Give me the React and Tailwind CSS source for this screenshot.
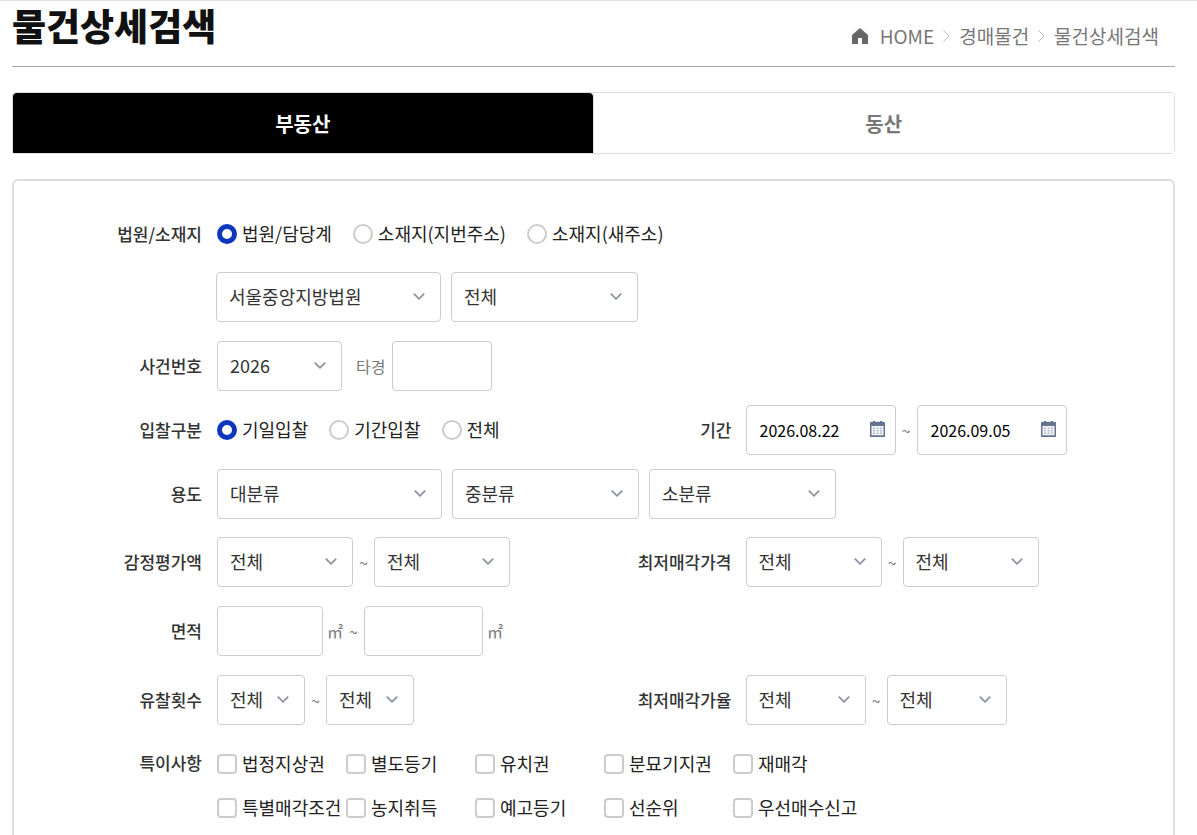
import { useState } from "react";

const COURT_TYPES = ["법원/담당계", "소재지(지번주소)", "소재지(새주소)"];
const BID_TYPES = ["기일입찰", "기간입찰", "전체"];
const SPECIALS = [
  "법정지상권",
  "별도등기",
  "유치권",
  "분묘기지권",
  "재매각",
  "특별매각조건",
  "농지취득",
  "예고등기",
  "선순위",
  "우선매수신고",
];

function HomeIcon() {
  return (
    <svg className="w-4 h-4 mr-3" viewBox="0 0 16 16" fill="#666" aria-hidden="true">
      <path d="M8 0L0 7v9h6v-6h4v6h6V7z" />
    </svg>
  );
}

function CrumbArrow() {
  return (
    <svg className="w-[7px] h-3 mx-[9px]" viewBox="0 0 7 12" fill="none" stroke="#bbb" aria-hidden="true">
      <path d="M0.5 0.5l5.500 5.500-5.500 5.500" />
    </svg>
  );
}

function CalendarIcon() {
  return (
    <svg className="w-[15px] h-4" viewBox="0 0 15 16" aria-hidden="true">
      <rect x="0.75" y="1.5" width="13.5" height="13.75" rx="1" fill="#f4f6fa" stroke="#66748f" strokeWidth="1.5" />
      <path d="M0 1.5h15V5H0zM0 14.5h15V16H0z" fill="#66748f" />
      <path d="M3 0h2v2H3zM10 0h2v2h-2z" fill="#66748f" />
      <path
        d="M3 6.500h2V8H3zM6.500 6.500h2V8h-2zM10 6.500h2V8h-2zM3 9h2v1.500H3zM6.500 9h2v1.500h-2zM10 9h2v1.500h-2zM3 11.500h2v1.500H3zM6.500 11.500h2v1.500h-2zM10 11.500h2v1.500h-2z"
        fill="#b4bccb"
      />
    </svg>
  );
}

function Select({ label, options = ["전체"], className }) {
  return (
    <div className={`relative shrink-0 ${className}`}>
      <select
        aria-label={label}
        className="w-full h-[50px] pl-3 pr-8 pb-[2px] appearance-none rounded border border-[#ccc] bg-white text-[#333]"
      >
        {options.map((option) => (
          <option key={option}>{option}</option>
        ))}
      </select>
      <svg
        className="absolute right-4 top-[21px] w-3 h-[7px] pointer-events-none"
        viewBox="0 0 12 7"
        fill="none"
        stroke="#8d93a1"
        strokeWidth="1.8"
        aria-hidden="true"
      >
        <path d="M0.8 0.7L6 5.800l5.200-5.100" />
      </svg>
    </div>
  );
}

function TextInput({ label, className }) {
  return (
    <input
      type="text"
      aria-label={label}
      className={`h-[50px] px-3 shrink-0 rounded border border-[#ccc] bg-white ${className}`}
    />
  );
}

function DateInput({ label, value }) {
  return (
    <div className="relative w-[150px] shrink-0">
      <input
        type="text"
        aria-label={label}
        defaultValue={value}
        className="w-full h-[50px] pl-[13px] pr-8 rounded border border-[#ccc] bg-white text-base text-black"
      />
      <button type="button" aria-label={`${label} 달력`} className="absolute right-[11px] top-4">
        <CalendarIcon />
      </button>
    </div>
  );
}

function RadioGroup({ name, options }) {
  const [selected, setSelected] = useState(options[0]);

  return (
    <div className="flex items-center gap-[21px]" role="radiogroup">
      {options.map((option) => (
        <label key={option} className="flex items-center gap-[5px] text-[#222] whitespace-nowrap">
          <input
            type="radio"
            name={name}
            checked={selected === option}
            onChange={() => setSelected(option)}
            className="w-5 h-5 appearance-none rounded-full border-2 border-[#ccc] bg-white checked:border-[5px] checked:border-[#0b36bd]"
          />
          <span className="pb-[2px]">{option}</span>
        </label>
      ))}
    </div>
  );
}

function Tilde() {
  return <span className="w-[21px] text-center text-base text-[#777]">~</span>;
}

function Field({ label, right, children }) {
  return (
    <div className="flex items-center">
      <div
        className={`${right ? "w-[138px] mr-[14px]" : "w-[188px] mr-[15px]"} shrink-0 text-right text-[17px] font-medium text-[#333]`}
      >
        {label}
      </div>
      {children}
    </div>
  );
}

export default function App() {
  const [tab, setTab] = useState("부동산");

  return (
    <div className="border-t border-[#ddd] bg-white pl-3 pr-[22px] font-['Noto_Sans_CJK_KR','Noto_Sans_CJK_JP',sans-serif] text-lg leading-6 text-[#333]">
      <header className="flex justify-between border-b border-[#aaa] h-[66px]">
        <h1 className="text-[37px] leading-[48px] font-black text-[#111]">물건상세검색</h1>
        <nav className="flex items-center pt-[5px] pr-4 text-[19px] text-[#777]">
          <HomeIcon />
          <a href="#home">HOME</a>
          <CrumbArrow />
          <a href="#auction">경매물건</a>
          <CrumbArrow />
          <a href="#search">물건상세검색</a>
        </nav>
      </header>

      <div className="grid grid-cols-2 mt-[25px] rounded border border-[#ddd]" role="tablist">
        {["부동산", "동산"].map((name) => (
          <button
            key={name}
            type="button"
            role="tab"
            aria-selected={tab === name}
            onClick={() => setTab(name)}
            className="h-[60px] border-r border-[#ddd] last:border-r-0"
          >
            <span
              className={`flex h-full items-center justify-center pt-[2px] rounded-t text-xl font-bold ${
                tab === name ? "bg-black text-white" : "bg-white text-[#777]"
              }`}
            >
              {name}
            </span>
          </button>
        ))}
      </div>

      <form className="mt-[25px] pt-10 pb-10 rounded-md border-2 border-[#ddd]">
        <Field label="법원/소재지">
          <RadioGroup name="courtType" options={COURT_TYPES} />
        </Field>
        <div className="flex gap-[10px] mt-[25px] ml-[202px]">
          <Select label="법원" options={["서울중앙지방법원"]} className="w-[225px]" />
          <Select label="담당계" className="w-[187px]" />
        </div>

        <div className="mt-[19px]">
          <Field label="사건번호">
            <Select label="사건연도" options={["2026"]} className="w-[125px]" />
            <label className="flex items-center text-base text-[#777]">
              <span className="ml-[14px] mr-[7px]">타경</span>
              <TextInput label="타경" className="w-[100px]" />
            </label>
          </Field>
        </div>

        <div className="grid grid-cols-2 mt-[14px]">
          <Field label="입찰구분">
            <RadioGroup name="bidType" options={BID_TYPES} />
          </Field>
          <Field label="기간" right>
            <DateInput label="시작일" value="2026.08.22" />
            <Tilde />
            <DateInput label="종료일" value="2026.09.05" />
          </Field>
        </div>

        <div className="mt-[14px]">
          <Field label="용도">
            <div className="flex gap-[10px]">
              <Select label="대분류" options={["대분류"]} className="w-[225px]" />
              <Select label="중분류" options={["중분류"]} className="w-[187px]" />
              <Select label="소분류" options={["소분류"]} className="w-[187px]" />
            </div>
          </Field>
        </div>

        <div className="grid grid-cols-2 mt-[18px]">
          <Field label="감정평가액">
            <Select label="감정평가액 최소" className="w-[136px]" />
            <Tilde />
            <Select label="감정평가액 최대" className="w-[136px]" />
          </Field>
          <Field label="최저매각가격" right>
            <Select label="최저매각가격 최소" className="w-[136px]" />
            <Tilde />
            <Select label="최저매각가격 최대" className="w-[136px]" />
          </Field>
        </div>

        <div className="mt-[19px]">
          <Field label="면적">
            <TextInput label="면적 최소" className="w-[106px]" />
            <span className="ml-1 text-base text-[#777]">㎡</span>
            <Tilde />
            <TextInput label="면적 최대" className="w-[119px]" />
            <span className="ml-1 text-base text-[#777]">㎡</span>
          </Field>
        </div>

        <div className="grid grid-cols-2 mt-[19px]">
          <Field label="유찰횟수">
            <Select label="유찰횟수 최소" className="w-[88px]" />
            <Tilde />
            <Select label="유찰횟수 최대" className="w-[88px]" />
          </Field>
          <Field label="최저매각가율" right>
            <Select label="최저매각가율 최소" className="w-[120px]" />
            <Tilde />
            <Select label="최저매각가율 최대" className="w-[120px]" />
          </Field>
        </div>

        <div className="flex mt-[26px]">
          <div className="w-[188px] mr-[15px] shrink-0 text-right text-[17px] font-medium text-[#333]">특이사항</div>
          <div className="grid grid-cols-[repeat(5,129px)] gap-y-[18px]">
            {SPECIALS.map((name) => (
              <label key={name} className="flex items-center gap-[5px] text-[#222] whitespace-nowrap">
                <input
                  type="checkbox"
                  className="w-5 h-5 shrink-0 appearance-none rounded border-2 border-[#ccc] bg-white checked:bg-[#0b36bd]"
                />
                <span className="pb-[2px]">{name}</span>
              </label>
            ))}
          </div>
        </div>
      </form>
    </div>
  );
}
